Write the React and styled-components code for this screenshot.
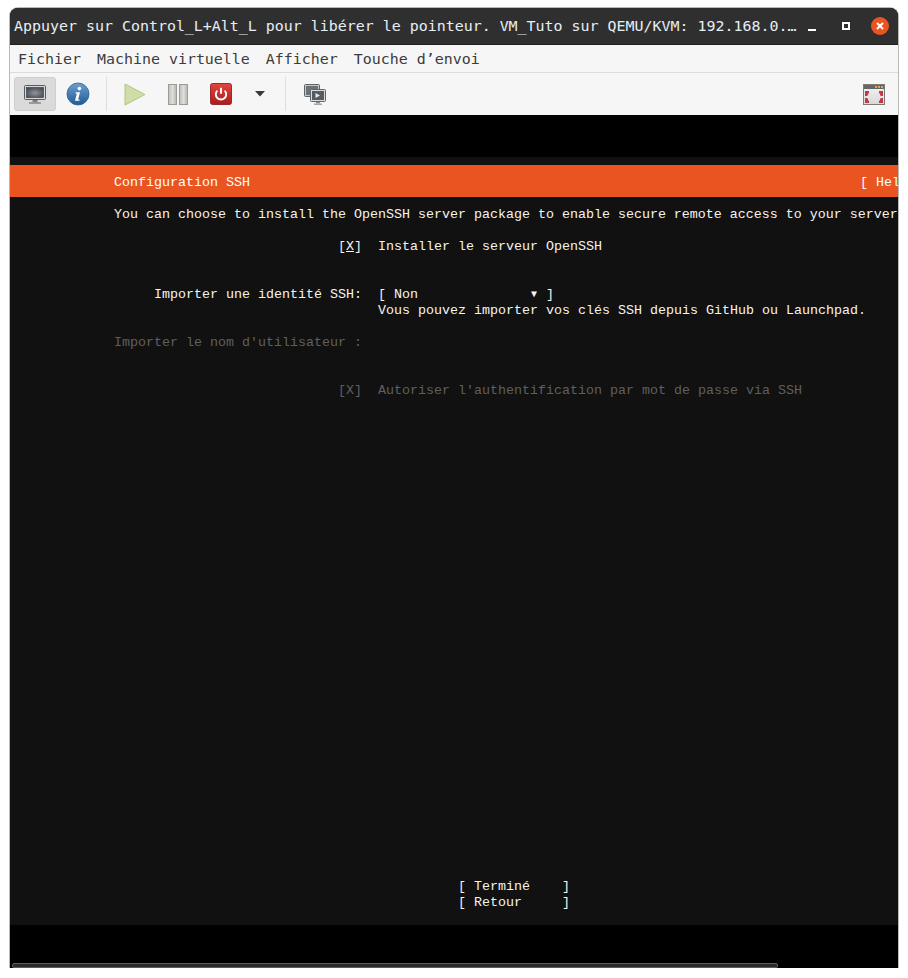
import React from 'react';
import styled, { createGlobalStyle } from 'styled-components';

const GlobalStyle = createGlobalStyle`
  html, body {
    margin: 0;
    padding: 0;
    background: #fff;
  }
`;

const Window = styled.div`
  position: relative;
  width: 888px;
  height: 960px;
  margin: 8px 0 0 10px;
  border-radius: 8px 8px 0 0;
  overflow: hidden;
  background: #000;
  box-shadow: 0 0 0 1px #b9b9b9;
  display: flex;
  flex-direction: column;
`;

const TitleBar = styled.div`
  height: 36px;
  flex: none;
  background: #302f2f;
  border-bottom: 1px solid #1f1f1f;
  display: flex;
  align-items: center;
  padding: 0 8px 0 4px;
  font: 14.95px/36px "DejaVu Sans Mono", monospace;
  color: #e6eef5;
`;

const TitleText = styled.span`
  flex: 1;
  white-space: pre;
`;

const WinButton = styled.span`
  width: 20px;
  height: 20px;
  display: flex;
  align-items: ${p => p.$align || 'center'};
  justify-content: center;
  margin-left: ${p => p.$gap}px;
`;

const Menu = styled.div`
  height: 27px;
  flex: none;
  background: #f6f6f6;
  border-bottom: 1px solid #dcdcdc;
  display: flex;
  gap: 16px;
  padding-left: 8px;
  font: 14.95px/28px "DejaVu Sans Mono", monospace;
  color: #3c3c3c;
`;

const Toolbar = styled.div`
  height: 42px;
  flex: none;
  background: #f6f6f6;
  display: flex;
  align-items: center;
  gap: 1px;
  padding: 0 3px 0 4px;
`;

const ToolButton = styled.div`
  width: ${p => p.$w || 42}px;
  height: 34px;
  box-sizing: border-box;
  display: flex;
  align-items: center;
  justify-content: center;
  border-radius: 3px;
  background: ${p => (p.$active ? '#dadada' : 'transparent')};
  border: 1px solid ${p => (p.$active ? '#cfcfcf' : 'transparent')};
`;

const ToolSep = styled.div`
  width: 1px;
  height: 34px;
  background: #dedede;
  margin: 0 ${p => p.$right}px 0 ${p => p.$left}px;
`;

const Spacer = styled.div`
  flex: 1;
`;

const Screen = styled.div`
  flex: 1;
  display: flex;
  flex-direction: column;
  padding-top: 42px;
  background: #000;
`;

const Terminal = styled.div`
  height: 768px;
  padding-top: 8px;
  box-sizing: border-box;
  background: #111;
  overflow: hidden;
  font: 13.33px/16px "Liberation Mono", monospace;
  color: #f4f4f4;
`;

const Header = styled.div`
  height: 32px;
  box-sizing: border-box;
  padding: 4px 0 0 104px;
  background: #e95420;
  color: #fff;
  display: flex;
  align-items: center;
  justify-content: space-between;
  white-space: pre;
  margin-bottom: 10px;
`;

const HelpLabel = styled.span`
  width: 38px;
  overflow: hidden;
`;

const Line = styled.div`
  height: 16px;
  white-space: pre;
  width: 888px;
  overflow: hidden;
  padding-left: ${p => p.$left}px;
  box-sizing: border-box;
  margin-top: ${p => p.$top || 0}px;
  color: ${p => (p.$dim ? '#5f5f5f' : 'inherit')};
`;

const Underlined = styled.span`
  text-decoration: underline;
`;

const DropArrow = styled.span`
  display: inline-block;
  width: 8px;
  text-align: center;
  font-size: 10px;
  vertical-align: 1px;
`;

const Scrollbar = styled.div`
  position: absolute;
  left: 2px;
  bottom: 0;
  width: 766px;
  height: 5px;
  box-sizing: border-box;
  background: #2a2a2a;
  border: 1px solid #5c5c5c;
  border-radius: 2px;
`;

const MonitorIcon = () => (
  <svg width="22" height="19" viewBox="0 0 22 19">
    <defs>
      <radialGradient id="monitorScreen" cx="0.5" cy="0.55" r="0.7">
        <stop offset="0" stopColor="#8f959b" />
        <stop offset="1" stopColor="#3a4048" />
      </radialGradient>
    </defs>
    <rect x="0.5" y="0.5" width="21" height="14" rx="1" fill="#d8d8d8" stroke="#5a5a5a" />
    <rect x="2.5" y="2.5" width="17" height="10" fill="url(#monitorScreen)" stroke="#33373c" strokeWidth="0.6" />
    <rect x="8.5" y="15" width="5" height="2" fill="#7c7c7c" />
    <rect x="5" y="17" width="12" height="2" rx="0.5" fill="#9a9a9a" />
  </svg>
);

const InfoIcon = () => (
  <svg width="24" height="24" viewBox="0 0 24 24">
    <defs>
      <linearGradient id="infoFill" x1="0" y1="0" x2="0" y2="1">
        <stop offset="0" stopColor="#6f9fd0" />
        <stop offset="1" stopColor="#1f5c96" />
      </linearGradient>
    </defs>
    <circle cx="12" cy="12" r="11" fill="url(#infoFill)" stroke="#2e6294" strokeWidth="0.8" />
    <circle cx="13.4" cy="6.6" r="1.8" fill="#fff" />
    <path d="M9.8 10.2h4.2l-1.9 7.2h1.6l-.4 1.3H9l1.9-7.2H9.5z" fill="#fff" />
  </svg>
);

const PlayIcon = () => (
  <svg width="22" height="23" viewBox="0 0 22 23">
    <path d="M1 1l20 10.5L1 22z" fill="#cfdda6" stroke="#b3c585" />
  </svg>
);

const PauseIcon = () => (
  <svg width="20" height="21" viewBox="0 0 20 21">
    <defs>
      <linearGradient id="pauseFill" x1="0" y1="0" x2="1" y2="0">
        <stop offset="0" stopColor="#bcbeb8" />
        <stop offset="0.5" stopColor="#dededa" />
        <stop offset="1" stopColor="#b4b6b0" />
      </linearGradient>
    </defs>
    <rect x="0.5" y="0.5" width="8" height="20" fill="url(#pauseFill)" stroke="#9a9c96" />
    <rect x="11.5" y="0.5" width="8" height="20" fill="url(#pauseFill)" stroke="#9a9c96" />
  </svg>
);

const PowerIcon = () => (
  <svg width="22" height="22" viewBox="0 0 22 22">
    <defs>
      <linearGradient id="powerFill" x1="0" y1="0" x2="0" y2="1">
        <stop offset="0" stopColor="#e4453f" />
        <stop offset="1" stopColor="#a81c1c" />
      </linearGradient>
    </defs>
    <rect x="0.5" y="0.5" width="21" height="21" rx="2" fill="url(#powerFill)" stroke="#9d2a2a" />
    <path d="M7.4 7.6a5.2 5.2 0 1 0 7.2 0" fill="none" stroke="#fff" strokeWidth="1.9" />
    <path d="M11 4.8v6" stroke="#fff" strokeWidth="1.9" />
  </svg>
);

const CaretIcon = () => (
  <svg width="10" height="6" viewBox="0 0 10 6">
    <path d="M0 0h10L5 5.5z" fill="#3a3a3a" />
  </svg>
);

const SnapshotIcon = () => (
  <svg width="22" height="21" viewBox="0 0 22 21">
    <rect x="0.5" y="0.5" width="15" height="12" rx="1" fill="#c4c6c8" stroke="#5f6468" />
    <rect x="2" y="2" width="12" height="9" fill="#6c7278" />
    <rect x="6.5" y="5.5" width="15" height="12" rx="1" fill="#dcdcdc" stroke="#5f6468" />
    <rect x="8" y="7" width="12" height="9" fill="#555c63" />
    <path d="M11.5 9l4.5 2.5-4.5 2.5z" fill="#e8e8e8" />
    <rect x="12" y="18" width="4" height="1.5" fill="#8f8f8f" />
    <rect x="10" y="19.5" width="8" height="1.5" fill="#a8a8a8" />
  </svg>
);

const FullscreenIcon = () => (
  <svg width="22" height="21" viewBox="0 0 22 21">
    <defs>
      <linearGradient id="fullBody" x1="0" y1="0" x2="0" y2="1">
        <stop offset="0" stopColor="#f4f4f4" />
        <stop offset="1" stopColor="#d8d8d8" />
      </linearGradient>
    </defs>
    <rect x="0.5" y="0.5" width="21" height="20" fill="url(#fullBody)" stroke="#7b7b7b" />
    <rect x="1" y="1" width="20" height="4" fill="#666" />
    <rect x="12" y="2" width="2" height="2" fill="#e0a840" />
    <rect x="15" y="2" width="2" height="2" fill="#e0a840" />
    <rect x="18" y="2" width="2" height="2" fill="#e0a840" />
    <path d="M2 7h4v2l-1 1v1l-1 1H2zM20 7h-4v2l1 1v1l1 1h2z" fill="#c23a44" />
    <path d="M2 19h4v-2l-1-1v-1l-1-1H2zM20 19h-4v-2l1-1v-1l1-1h2z" fill="#c23a44" />
  </svg>
);

const App = () => (
  <>
    <GlobalStyle />
    <Window>
      <TitleBar>
        <TitleText>Appuyer sur Control_L+Alt_L pour libérer le pointeur. VM_Tuto sur QEMU/KVM: 192.168.0.…</TitleText>
        <WinButton $gap={0} $align="flex-end">
          <svg width="8" height="2" viewBox="0 0 8 2" style={{ marginBottom: 5 }}><rect width="8" height="2" fill="#fff" /></svg>
        </WinButton>
        <WinButton $gap={14}>
          <svg width="8" height="8" viewBox="0 0 8 8"><rect x="1" y="1" width="6" height="6" fill="none" stroke="#fff" strokeWidth="2" /></svg>
        </WinButton>
        <WinButton $gap={14}>
          <svg width="18" height="18" viewBox="0 0 18 18">
            <circle cx="9" cy="9" r="9" fill="#e95420" />
            <path d="M6 6l6 6M12 6l-6 6" stroke="#fff" strokeWidth="2" />
          </svg>
        </WinButton>
      </TitleBar>
      <Menu>
        <span>Fichier</span>
        <span>Machine virtuelle</span>
        <span>Afficher</span>
        <span>Touche d’envoi</span>
      </Menu>
      <Toolbar>
        <ToolButton $active><MonitorIcon /></ToolButton>
        <ToolButton><InfoIcon /></ToolButton>
        <ToolSep $left={6} $right={6} />
        <ToolButton><PlayIcon /></ToolButton>
        <ToolButton><PauseIcon /></ToolButton>
        <ToolButton><PowerIcon /></ToolButton>
        <ToolButton $w={34}><CaretIcon /></ToolButton>
        <ToolSep $left={7} $right={7} />
        <ToolButton><SnapshotIcon /></ToolButton>
        <Spacer />
        <ToolButton><FullscreenIcon /></ToolButton>
      </Toolbar>
      <Screen>
        <Terminal>
          <Header>
            <span>Configuration SSH</span>
            <HelpLabel>[ Hel</HelpLabel>
          </Header>
          <Line $left={104}>You can choose to install the OpenSSH server package to enable secure remote access to your server.</Line>
          <Line $left={328} $top={16}>[<Underlined>X</Underlined>]  Installer le serveur OpenSSH</Line>
          <Line $left={144} $top={32}>Importer une identité SSH:  [ Non              <DropArrow>▼</DropArrow> ]</Line>
          <Line $left={368}>Vous pouvez importer vos clés SSH depuis GitHub ou Launchpad.</Line>
          <Line $left={104} $top={16} $dim>Importer le nom d'utilisateur :</Line>
          <Line $left={328} $top={32} $dim>[X]  Autoriser l'authentification par mot de passe via SSH</Line>
          <Line $left={448} $top={480}>[ Terminé    ]</Line>
          <Line $left={448}>[ Retour     ]</Line>
        </Terminal>
      </Screen>
      <Scrollbar />
    </Window>
  </>
);

export default App;
